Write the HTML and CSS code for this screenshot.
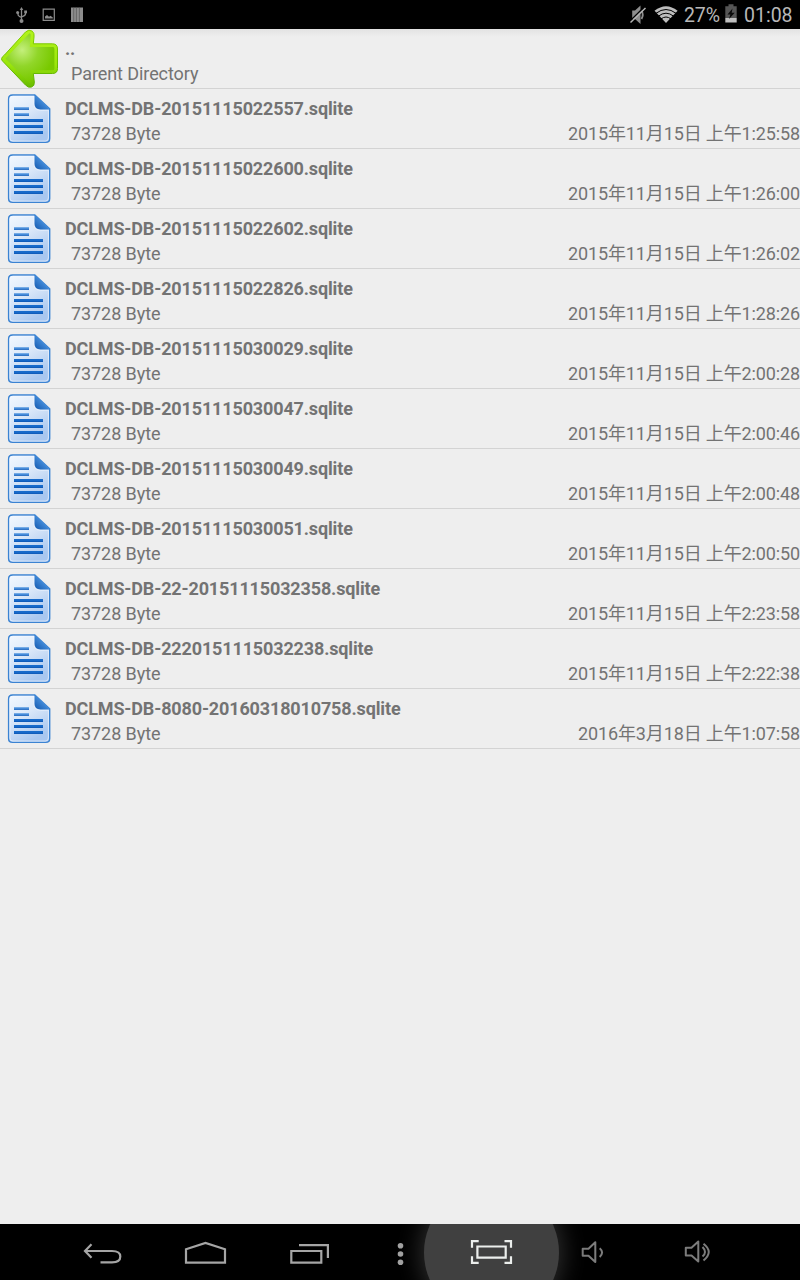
FILE: index.html
```html
<!DOCTYPE html>
<html lang="zh">
<head>
<meta charset="utf-8">
<title>File browser</title>
<link rel="stylesheet" href="styles.css">
</head>
<body>
<svg class="defs" aria-hidden="true">
  <defs>
    <linearGradient id="page" x1="0" y1="0" x2="0.5" y2="1"><stop offset="0" stop-color="#f4f9ff"/><stop offset="0.45" stop-color="#dce9f9"/><stop offset="1" stop-color="#a9c7ef"/></linearGradient>
    <linearGradient id="fold" x1="0" y1="1" x2="1" y2="0"><stop offset="0" stop-color="#1459ae"/><stop offset="0.5" stop-color="#3f87d6"/><stop offset="1" stop-color="#5b9ee4"/></linearGradient>
    <radialGradient id="leaf" cx="0.34" cy="0.34" r="0.65"><stop offset="0" stop-color="#c4ef7c"/><stop offset="0.5" stop-color="#91d629"/><stop offset="1" stop-color="#79c900"/></radialGradient>
    <linearGradient id="rim" x1="0" y1="0" x2="0" y2="1"><stop offset="0" stop-color="#84cf00"/><stop offset="1" stop-color="#5cb000"/></linearGradient>
    <linearGradient id="edge" x1="0" y1="0" x2="0" y2="1"><stop offset="0" stop-color="#b2f31d"/><stop offset="0.6" stop-color="#9be60c"/><stop offset="1" stop-color="#68bb00"/></linearGradient>
    <symbol id="file" viewBox="0 0 60 60">
      <path d="M12.500 6H34.800L49.700 19.800V49.500Q49.700 53.400 45.700 53.400H12.500Q8.600 53.400 8.600 49.500V9.900Q8.600 6 12.500 6Z" fill="url(#page)" stroke="#3b83d2" stroke-width="1.400"/>
      <path d="M13 7.300H34V14.500Q34 21.200 40.500 21.200H48.400V49Q48.400 52.100 45.300 52.100H13Q9.900 52.100 9.900 49V10.300Q9.900 7.300 13 7.300Z" fill="none" stroke="#f2f8ff" stroke-opacity=".65"/>
      <path d="M34.500 5.600L50 20.600Q46 20.400 40.500 20.400Q34.500 20.300 34.500 15Z" fill="url(#fold)"/>
      <path d="M14 19.500H29M14 25.500H29" stroke="#5095e0" stroke-width="2.600"/>
      <path d="M14 31.500H43M14 37.500H43M14 43.500H43" stroke="#176bcb" stroke-width="2.800"/>
      <path d="M14 20.300H29M14 26.300H29M14 32.400H43M14 38.400H43M14 44.400H43" stroke="#0e57b5" stroke-width=".8"/>
    </symbol>
  </defs>
</svg>
<div class="screen">
  <header class="status">
    <svg class="status-left" viewBox="0 0 100 29" fill="none" stroke="#8c8c8c">
      <path d="M21.500 9V20M18 12.500V14.500Q18 16 21.500 17.500M25.500 12V14Q25.500 15.500 21.500 17" stroke-width="1.300"/>
      <path d="M19.700 10L21.500 7L23.300 10Z" fill="#8c8c8c" stroke="none"/><circle cx="21.500" cy="21" r="2" fill="#8c8c8c" stroke="none"/><circle cx="17.600" cy="12.500" r="1.500" fill="#8c8c8c" stroke="none"/><path d="M24.200 10.500H27V13.300H24.200Z" fill="#8c8c8c" stroke="none"/>
      <path d="M43.200 9.200H54.300V20.300H43.200Z" stroke-width="1.200"/><path d="M45 18.600V16.500L47 15L49 16.800L50.500 15.800L52.800 17.500V18.600Z" fill="#8c8c8c" stroke="none"/>
      <path d="M71 7.500H83V22H71Z" fill="#8c8c8c" stroke="none"/><path d="M73.700 7.500V22M76.400 7.500V22M79.400 7.500V22" stroke="#565656" stroke-width=".7"/>
    </svg>
    <div class="status-right">
      <svg class="signal" viewBox="628 0 52 29">
        <path d="M632.200 10.500H635L640.500 5.500V24L635 19H632.200Z" fill="#8d8d8d"/>
        <path d="M641.500 10.500Q644 14.500 641.500 19" fill="none" stroke="#8d8d8d" stroke-width="1.800"/>
        <path d="M630 21L644.500 6.800" stroke="#000" stroke-width="1.300"/><path d="M630.500 22.500L645.500 8" stroke="#b4b4b4" stroke-width="1.500"/>
        <path d="M654.500 10.800Q666 1.500 677.600 10.800L666 23Z" fill="#bdbdbd"/>
        <path d="M656 13.300Q666 5.700 676 13.300M658.400 16.200Q666 10.200 673.600 16.200M661 19Q666 15 671 19" stroke="#000" stroke-width="1" fill="none"/>
      </svg>
      <span class="percent">27%</span>
      <svg class="battery" viewBox="724 0 15 29"><path d="M728.500 4.300H733.500V6.200H736.700V18H725.300V6.200H728.500Z" fill="#555"/><path d="M725.300 18H736.700V22.500H725.300Z" fill="#bebebe"/><path d="M732.500 8.500L727.500 14.500H730.400L729 19L734.700 12.800H731.700Z" fill="#0a0a0a"/></svg>
      <span class="clock">01:08</span>
    </div>
  </header>
  <main class="list">
    <div class="row parent">
      <svg class="icon" viewBox="0 0 60 60">
        <path d="M4.500 26L25.500 3Q29 -.3 32.300 2.200Q34.700 4.200 34 8L33.300 14.800H52.500Q57.500 14.800 57.500 20V39.500Q57.500 44.500 52.500 44.500H33.300L34.300 53Q34.700 57 31.500 58Q28.500 59.200 25.500 56L3 32.500Q-.5 29.600 4.500 26Z" fill="url(#edge)" stroke="url(#rim)" stroke-width="1"/>
        <path d="M5.500 29.500L29.500 4.200Q31 4.200 30.700 7L29.800 18H53Q54.400 18 54.400 20V39.500Q54.400 41.300 53 41.300H30.300L30.800 51.700Q31 54.700 28.700 53.500Z" fill="url(#leaf)"/>
      </svg>
      <div class="name">..</div><div class="meta"><span>Parent Directory</span></div>
    </div>
    <div class="row"><svg class="icon"><use href="#file"/></svg><div class="name">DCLMS-DB-20151115022557.sqlite</div><div class="meta"><span>73728 Byte</span><time>2015年11月15日 上午1:25:58</time></div></div>
    <div class="row"><svg class="icon"><use href="#file"/></svg><div class="name">DCLMS-DB-20151115022600.sqlite</div><div class="meta"><span>73728 Byte</span><time>2015年11月15日 上午1:26:00</time></div></div>
    <div class="row"><svg class="icon"><use href="#file"/></svg><div class="name">DCLMS-DB-20151115022602.sqlite</div><div class="meta"><span>73728 Byte</span><time>2015年11月15日 上午1:26:02</time></div></div>
    <div class="row"><svg class="icon"><use href="#file"/></svg><div class="name">DCLMS-DB-20151115022826.sqlite</div><div class="meta"><span>73728 Byte</span><time>2015年11月15日 上午1:28:26</time></div></div>
    <div class="row"><svg class="icon"><use href="#file"/></svg><div class="name">DCLMS-DB-20151115030029.sqlite</div><div class="meta"><span>73728 Byte</span><time>2015年11月15日 上午2:00:28</time></div></div>
    <div class="row"><svg class="icon"><use href="#file"/></svg><div class="name">DCLMS-DB-20151115030047.sqlite</div><div class="meta"><span>73728 Byte</span><time>2015年11月15日 上午2:00:46</time></div></div>
    <div class="row"><svg class="icon"><use href="#file"/></svg><div class="name">DCLMS-DB-20151115030049.sqlite</div><div class="meta"><span>73728 Byte</span><time>2015年11月15日 上午2:00:48</time></div></div>
    <div class="row"><svg class="icon"><use href="#file"/></svg><div class="name">DCLMS-DB-20151115030051.sqlite</div><div class="meta"><span>73728 Byte</span><time>2015年11月15日 上午2:00:50</time></div></div>
    <div class="row"><svg class="icon"><use href="#file"/></svg><div class="name">DCLMS-DB-22-20151115032358.sqlite</div><div class="meta"><span>73728 Byte</span><time>2015年11月15日 上午2:23:58</time></div></div>
    <div class="row"><svg class="icon"><use href="#file"/></svg><div class="name">DCLMS-DB-2220151115032238.sqlite</div><div class="meta"><span>73728 Byte</span><time>2015年11月15日 上午2:22:38</time></div></div>
    <div class="row"><svg class="icon"><use href="#file"/></svg><div class="name">DCLMS-DB-8080-20160318010758.sqlite</div><div class="meta"><span>73728 Byte</span><time>2016年3月18日 上午1:07:58</time></div></div>
  </main>
  <nav class="nav">
    <svg class="key" viewBox="50 0 104 56"><path d="M91.500 20.300L85 27L91.500 33.700M85.500 27H112Q120.300 27 120.300 32.500Q120.300 38.300 112 38.300H100.500"/></svg>
    <svg class="key" viewBox="154 0 103 56"><path d="M186 25.300L205.500 18.900L225 25.300V38.700H186Z"/></svg>
    <svg class="key" viewBox="257 0 104 56"><path d="M291.300 27H321.300V38.700H291.300ZM299 21.200H327.900V34"/></svg>
    <svg class="key" viewBox="361 0 79 56"><g fill="#a5a5a5" stroke="none"><circle cx="400.500" cy="21.800" r="2.800"/><circle cx="400.500" cy="30" r="2.800"/><circle cx="400.500" cy="38.200" r="2.800"/></g></svg>
    <span class="pressed"><span class="halo"></span><svg class="key lit" viewBox="440 0 103 56"><path d="M477.400 22.500H505.700V33.600H477.400ZM472 23.700V17.200H478.700M504.500 17.200H511V23.700M472 32.200V38.800H478.700M504.500 38.800H511V32.200"/></svg></span>
    <svg class="key volume" viewBox="543 0 99 56"><path d="M582.700 24.800H588.500L595.300 18.200V38L588.500 31.800H582.700ZM599.700 24.300Q604.500 28.500 599.700 33"/></svg>
    <svg class="key volume" viewBox="642 0 110 56"><path d="M685.800 23.800H691.500L698.300 17.500V37.500L691.500 31.500H685.800ZM702.500 23Q707.500 28 702.500 32.500M703.500 19.800Q714 28 703.500 36.500"/></svg>
  </nav>
</div>
</body>
</html>
```

FILE: styles.css
```css
body { margin: 0; font-family: Roboto, "Noto Sans CJK SC", sans-serif; }
.defs { position: absolute; width: 0; height: 0; }
.screen { display: flex; flex-direction: column; width: 800px; height: 1280px; overflow: hidden; background: #eee; }
.status { display: flex; justify-content: space-between; height: 29px; background: #000; color: #b8b8b8; }
.status-left { width: 100px; height: 29px; }
.status-right { display: flex; width: 172px; font-size: 19.5px; line-height: 31px; }
.signal { width: 52px; height: 29px; }
.percent { width: 40px; padding-left: 4px; white-space: nowrap; letter-spacing: -0.1px; }
.battery { width: 15px; height: 29px; }
.clock { padding-left: 5px; }
.list { flex: 1; background: linear-gradient(#e2e2e2, #eee 8px); }
.row { display: grid; grid-template: 37px 22px / 65px 1fr; box-sizing: border-box; height: 60px; border-bottom: 1px solid #d3d3d3; color: #737373; }
.icon { grid-row: 1 / 3; width: 60px; height: 60px; }
.name { padding-top: 9px; font-size: 18px; line-height: 22px; font-weight: 700; letter-spacing: -0.14px; }
.meta { display: flex; justify-content: space-between; padding-left: 6px; margin-top: -3px; font-size: 18px; line-height: 22px; letter-spacing: -0.08px; white-space: nowrap; }
.meta time { letter-spacing: -0.13px; }
.nav { display: grid; grid-template-columns: 104px 103px 104px 79px 103px 99px 110px; padding-left: 50px; height: 56px; background: #000; overflow: hidden; }
.key { display: block; width: 100%; height: 56px; fill: none; stroke: #a5a5a5; stroke-width: 2.2; }
.volume { stroke: #7c7c7c; stroke-width: 2; stroke-linejoin: round; }
.pressed { position: relative; }
.halo { position: absolute; left: -16px; top: -39px; width: 135px; height: 135px; border-radius: 50%; background: #404040; box-shadow: 0 0 24px 3px #303030; }
.lit { position: relative; stroke: #ebeeec; }
```
